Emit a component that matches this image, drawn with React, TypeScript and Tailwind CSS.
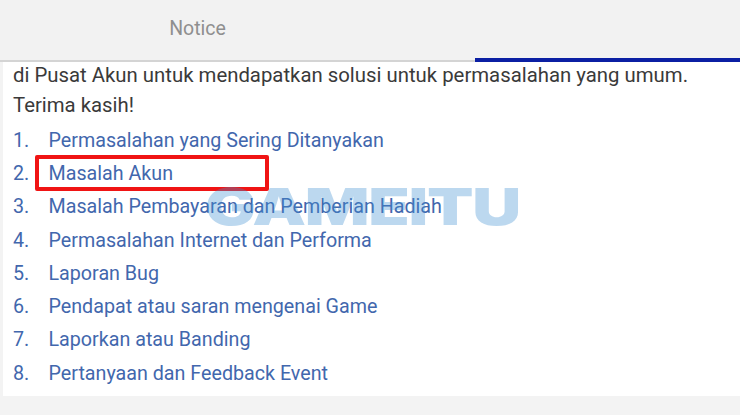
const items = [
  "Permasalahan yang Sering Ditanyakan",
  "Masalah Akun",
  "Masalah Pembayaran dan Pemberian Hadiah",
  "Permasalahan Internet dan Performa",
  "Laporan Bug",
  "Pendapat atau saran mengenai Game",
  "Laporkan atau Banding",
  "Pertanyaan dan Feedback Event",
];

export default function App() {
  return (
    <div className="relative h-[415px] w-[740px] overflow-hidden bg-[#f3f3f3] font-['Roboto',sans-serif]">
      {/* tabs */}
      <div className="relative flex h-[62px] border-b-2 border-[#d4d4d4] bg-[#f2f2f2]">
        <div className="flex h-[57px] w-[395px] items-center justify-center text-[19.5px] text-[#8f8f8f]">
          Notice
        </div>
        <div className="absolute bottom-[-2px] right-0 h-[4px] w-[265px] bg-[#0b1fa3]" />
      </div>

      <div className="ml-[3px] h-[334px] bg-white pl-[10px]">
        <p className="text-[20.35px] leading-[27px] text-[#3a3a3a]">
          di Pusat Akun untuk mendapatkan solusi untuk permasalahan yang umum.
        </p>
        <p className="mt-[3px] text-[20.35px] leading-[27px] text-[#3a3a3a]">Terima kasih!</p>
        <ol className="mt-[5px]">
          {items.map((item, i) => (
            <li key={item} className="flex h-[33.25px] items-center text-[19.7px] text-[#4267ad]">
              <span className="w-[35.5px]">{i + 1}.</span>
              <span>{item}</span>
            </li>
          ))}
        </ol>
      </div>

      {/* highlight box */}
      <div className="absolute left-[35px] top-[155px] h-[36px] w-[234px] rounded-[2px] border-[4px] border-[#f01414]" />
      {/* watermark */}
      <div className="absolute left-[205px] top-[180px] origin-left scale-x-[1.33] text-[51px] font-black leading-[54px] tracking-[-1px] text-[#3f8fd0]/35 font-['Inter',sans-serif]">
        GAMEITU
      </div>
    </div>
  );
}
